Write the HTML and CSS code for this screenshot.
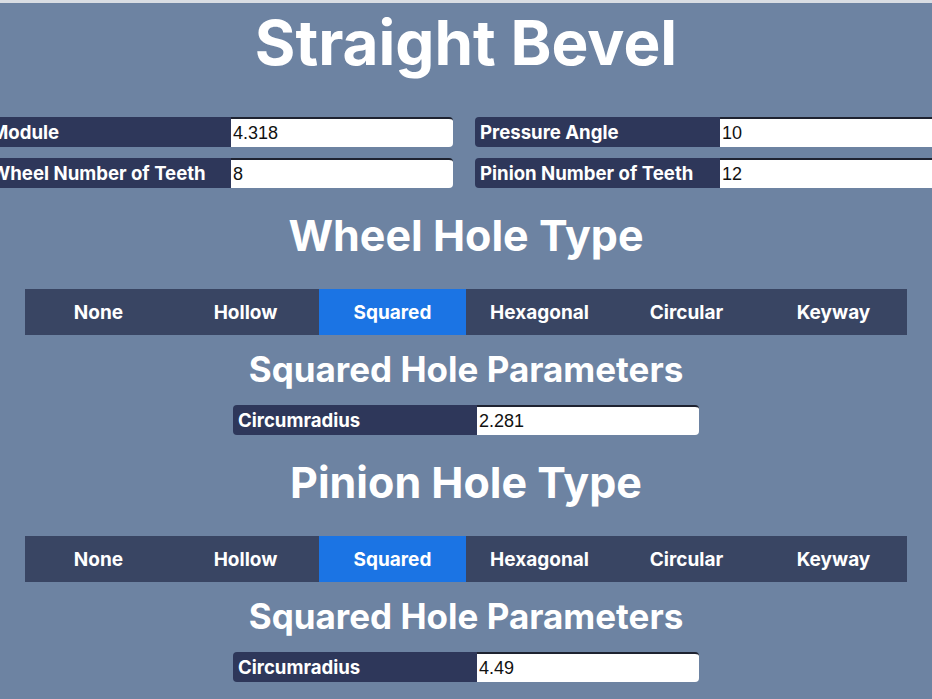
FILE: index.html
```html
<!DOCTYPE html>
<html>
<head>
<meta charset="utf-8">
<link rel="stylesheet" href="styles.css">
</head>
<body>
<div class="page">
  <h1 class="title">Straight Bevel</h1>
  <div class="params">
    <div class="field"><span class="label">Module</span><input class="value" value="4.318"></div>
    <div class="field"><span class="label">Pressure Angle</span><input class="value" value="10"></div>
    <div class="field"><span class="label">Wheel Number of Teeth</span><input class="value" value="8"></div>
    <div class="field"><span class="label">Pinion Number of Teeth</span><input class="value" value="12"></div>
  </div>

  <h2 class="section">Wheel Hole Type</h2>
  <div class="tabs">
    <div class="tab">None</div>
    <div class="tab">Hollow</div>
    <div class="tab active">Squared</div>
    <div class="tab">Hexagonal</div>
    <div class="tab">Circular</div>
    <div class="tab">Keyway</div>
  </div>
  <h3 class="sub">Squared Hole Parameters</h3>
  <div class="single">
    <div class="field"><span class="label">Circumradius</span><input class="value" value="2.281"></div>
  </div>

  <h2 class="section">Pinion Hole Type</h2>
  <div class="tabs">
    <div class="tab">None</div>
    <div class="tab">Hollow</div>
    <div class="tab active">Squared</div>
    <div class="tab">Hexagonal</div>
    <div class="tab">Circular</div>
    <div class="tab">Keyway</div>
  </div>
  <h3 class="sub">Squared Hole Parameters</h3>
  <div class="single">
    <div class="field"><span class="label">Circumradius</span><input class="value" value="4.49"></div>
  </div>
</div>
</body>
</html>
```

FILE: styles.css
```css
html, body {
  margin: 0;
  padding: 0;
  background: #6d83a2;
  overflow: hidden;
}
body {
  border-top: 3px solid #d9dde3;
  font-family: Inter, "Noto Sans", sans-serif;
  color: #ffffff;
}
.page {
  width: 932px;
  display: flex;
  flex-direction: column;
  align-items: center;
}
.title {
  margin: 8px 0 0 0;
  font-size: 62px;
  font-weight: 700;
  line-height: 64px;
  text-align: center;
}
.params {
  margin: 42px 0 0 -14px;
  align-self: flex-start;
  width: 956px;
  flex: none;
  display: grid;
  grid-template-columns: 467px 467px;
  column-gap: 22px;
  row-gap: 11px;
}
.field {
  display: flex;
  height: 30px;
}
.label {
  flex: none;
  width: 245px;
  background: #2e375a;
  border-radius: 4px 0 0 4px;
  font-size: 18.6px;
  font-weight: 700;
  line-height: 31px;
  padding-left: 5px;
  box-sizing: border-box;
  white-space: nowrap;
  overflow: hidden;
}
.value {
  flex: none;
  width: 222px;
  height: 30px;
  box-sizing: border-box;
  margin: 0;
  border: none;
  border-top: 2px solid #1e2230;
  border-radius: 0 4px 4px 0;
  background: #ffffff;
  font-family: "Liberation Sans", Arial, sans-serif;
  font-size: 18px;
  color: #111;
  padding: 0 2px;
  outline: none;
}
.section {
  margin: 21px 0 0 0;
  font-size: 43px;
  font-weight: 700;
  line-height: 52px;
  text-align: center;
}
.tabs {
  margin-top: 28px;
  width: 882px;
  display: grid;
  grid-template-columns: repeat(6, 1fr);
  background: #394563;
  height: 46px;
}
.tab {
  display: flex;
  align-items: center;
  justify-content: center;
  font-size: 19px;
  font-weight: 700;
}
.tab.active {
  background: #1b74e4;
}
.sub {
  margin: 12px 0 0 0;
  font-size: 35px;
  font-weight: 700;
  line-height: 44px;
  text-align: center;
}
.single {
  margin-top: 14px;
  width: 466px;
}
.single .label {
  width: 244px;
}
```
